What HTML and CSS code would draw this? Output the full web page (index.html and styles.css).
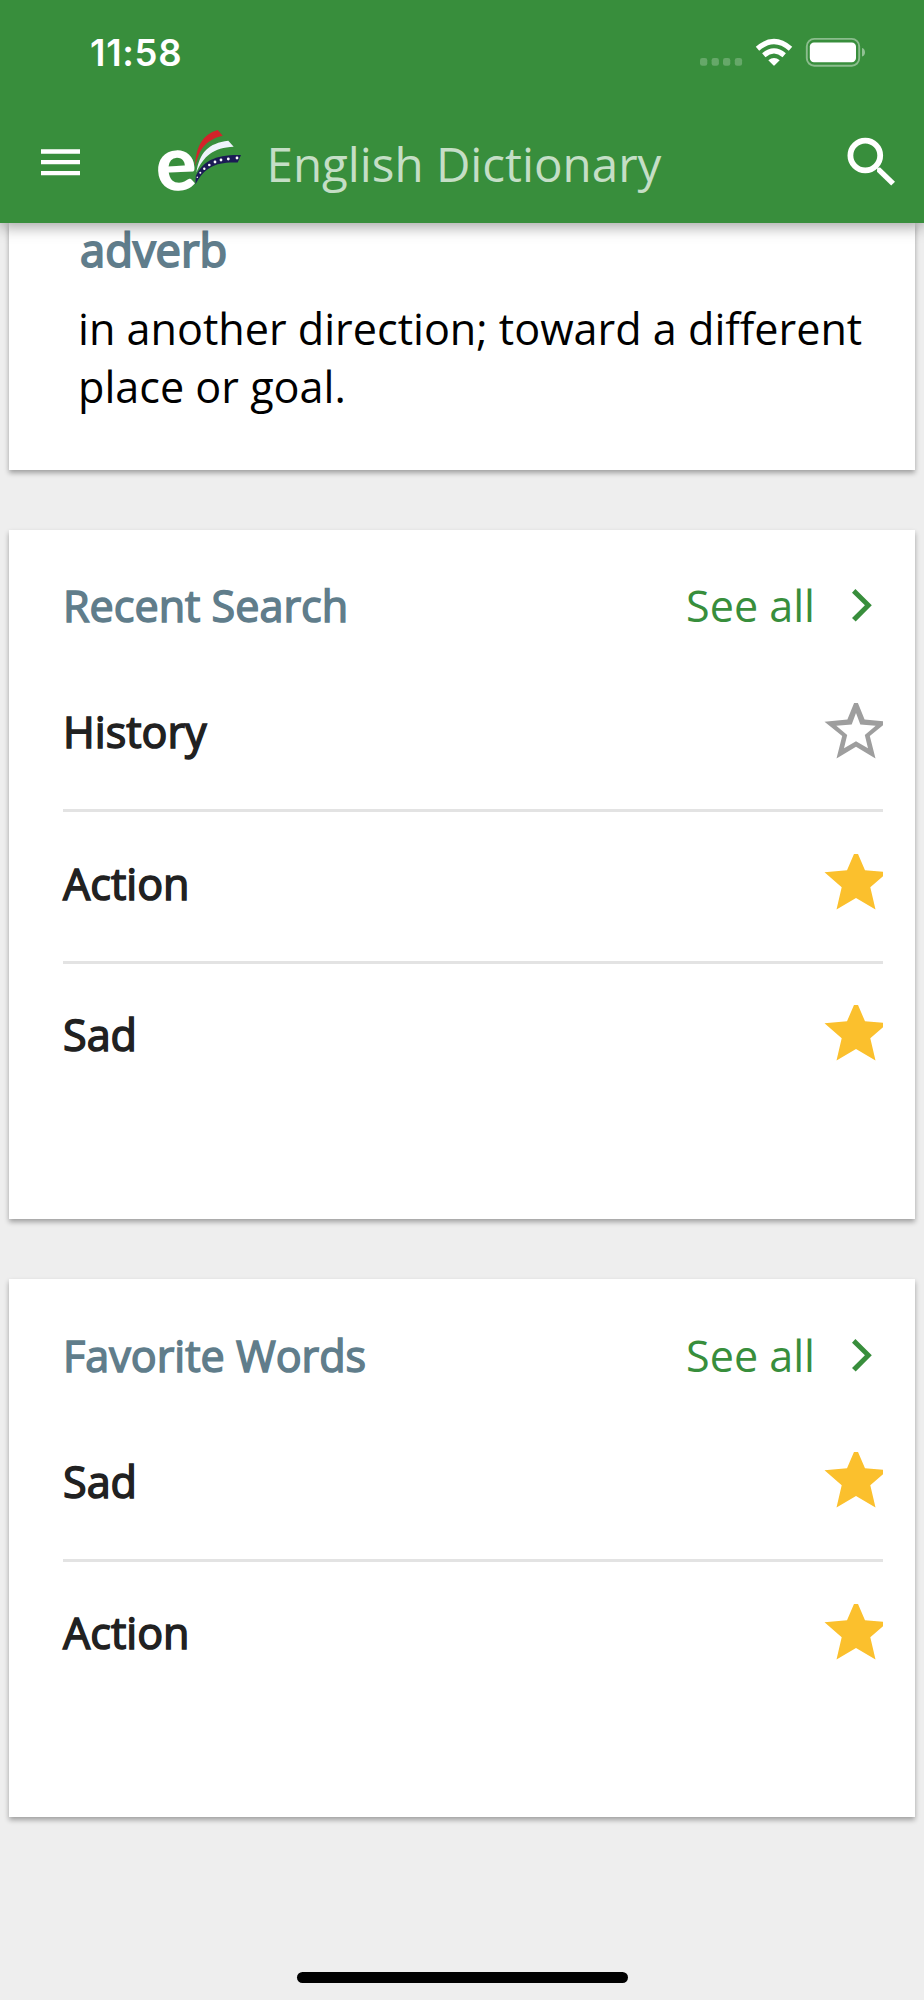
FILE: index.html
```html
<!DOCTYPE html>
<html lang="en">
<head>
<meta charset="utf-8">
<title>English Dictionary</title>
<link rel="stylesheet" href="styles.css">
</head>
<body>
<svg width="0" height="0" class="defs">
  <defs>
    <symbol id="star" viewBox="0 0 59 56">
      <path d="M32-4.7 41 16.3 63.5 18.2 46.3 33.3 51.5 55.5 32 44 12.5 55.5 17.7 33.3.5 18.2 23 16.3Z"/>
    </symbol>
    <symbol id="star-outline" viewBox="0 0 59 56">
      <path fill-rule="evenodd" d="M32-4.7 40.6 16.5 63.5 18.7 45.8 33 51.5 55.5 32 43.700 12.500 55.500 18.200 33 .5 18.700 23.400 16.500ZM32 10 27.700 21.400 12.300 22.700 23.200 32 20 45.300 32 38.300 44 45.300 40.800 32 51.700 22.700 36.300 21.400Z"/>
    </symbol>
    <symbol id="chevron" viewBox="0 0 20 33">
      <path d="M3.400 0 19.800 16.200 3.700 32.600 0 29 12.900 16.200 0 3.700Z"/>
    </symbol>
  </defs>
</svg>
<header class="app-header">
  <div class="status-bar">
    <span class="time">11:58</span>
    <svg class="status-icons" width="168" height="32" viewBox="699 36 168 32">
      <g fill="#fff" fill-opacity=".23">
        <rect x="700" y="58" width="7.3" height="7.8" rx="2.3"/>
        <rect x="711.6" y="58" width="7.3" height="7.8" rx="2.3"/>
        <rect x="723" y="58" width="7.3" height="7.8" rx="2.3"/>
        <rect x="734.8" y="58" width="7.3" height="7.8" rx="2.3"/>
      </g>
      <g fill="none" stroke="#fff" stroke-width="5.2">
        <path d="M757.5 48.7Q774 34.2 790.5 48.7"/>
        <path d="M763.8 55.2Q774 46.6 784.2 55.2"/>
      </g>
      <path d="M768.3 60.2Q774 55.6 779.7 60.2L774.7 65.3Q774 66 773.3 65.3Z" fill="#fff"/>
      <rect x="806.8" y="38.9" width="52.4" height="26.8" rx="7.5" fill="none" stroke="#fff" stroke-opacity=".42" stroke-width="1.9"/>
      <rect x="809.8" y="42.4" width="46.2" height="19.8" rx="4.2" fill="#fff"/>
      <path d="M862 48c4 1 4 7.600 0 8.600z" fill="#fff" fill-opacity=".45"/>
    </svg>
  </div>
  <div class="toolbar">
    <svg class="menu-icon" width="39" height="27" viewBox="0 0 39 27"><path d="M0 2.500H39M0 13.200H39M0 24.100H39" stroke="#fff" stroke-width="4.300"/></svg>
    <svg class="logo" width="86" height="66" viewBox="157 129 86 66">
      <text class="logo-letter" x="156" y="190.300" transform="rotate(-3 176 171)">e</text>
      <path fill="#d2232a" d="M195.400 166C195.500 148 202 134.500 217.700 130L222.700 135.700C207.500 139.500 199.500 147 195.400 166Z"/>
      <path fill="#eef3fb" d="M196.400 172.500C199.500 152.500 208.500 143 228.300 140.700L233.700 146.700C213.500 147.500 203.500 156 196.400 172.500Z"/>
      <path fill="#1b1a55" d="M195.400 184.500 195.800 176C203 161 215 154.500 241 155L237.700 162.500C216 161.500 204.500 167 195.400 184.500Z"/>
      <g fill="#fff"><circle cx="237" cy="158" r="1.400"/><circle cx="228.300" cy="159" r="1.400"/><circle cx="221" cy="160" r="1.400"/><circle cx="215" cy="162" r="1.400"/><circle cx="209.300" cy="165" r="1.300"/><circle cx="204.300" cy="168.700" r="1.200"/><circle cx="200.300" cy="172.700" r="1"/><circle cx="197.300" cy="177.300" r=".8"/></g>
    </svg>
    <h1 class="title">English Dictionary</h1>
    <svg class="search-icon" width="50" height="50" viewBox="846 136.500 50 50">
      <circle cx="865.300" cy="155" r="14.900" fill="none" stroke="#fff" stroke-width="5.800"/>
      <path d="M877.200 167.200 880.200 166.900 895 181.200 891.200 185 877 171.200Z" fill="#fff"/>
    </svg>
  </div>
</header>
<main class="content">
  <section class="card definition">
    <h2 class="part">adverb</h2>
    <p class="meaning">in another direction; toward a different place or goal.</p>
  </section>
  <section class="card recent">
    <div class="card-head"><h2 class="heading">Recent Search</h2><a class="see-all">See all</a><svg class="chevron"><use href="#chevron"/></svg></div>
    <ul class="words">
      <li class="word"><span>History</span><svg class="star empty"><use href="#star-outline"/></svg></li>
      <li class="word"><span>Action</span><svg class="star"><use href="#star"/></svg></li>
      <li class="word"><span>Sad</span><svg class="star"><use href="#star"/></svg></li>
    </ul>
  </section>
  <section class="card favorites">
    <div class="card-head"><h2 class="heading">Favorite Words</h2><a class="see-all">See all</a><svg class="chevron"><use href="#chevron"/></svg></div>
    <ul class="words">
      <li class="word"><span>Sad</span><svg class="star"><use href="#star"/></svg></li>
      <li class="word"><span>Action</span><svg class="star"><use href="#star"/></svg></li>
    </ul>
  </section>
</main>
<footer class="home-area"><div class="home-bar"></div></footer>
</body>
</html>
```
FILE: styles.css
```css
* { box-sizing: border-box; margin: 0; padding: 0; }
body {
  width: 924px;
  height: 2000px;
  display: flex;
  flex-direction: column;
  overflow: hidden;
  background: #eee;
  font-family: "Open Sans", "Noto Sans", sans-serif;
}
.defs { position: absolute; }
svg { display: block; flex: none; }
.app-header {
  position: relative;
  z-index: 1;
  flex: none;
  height: 222.6px;
  background: #388e3c;
  box-shadow: 0 4px 14px rgba(0, 0, 0, .36);
}
.status-bar {
  display: flex;
  align-items: center;
  justify-content: space-between;
  height: 104px;
  padding: 0 57px 0 90px;
}
.time {
  font: 600 36.500px/44px Inter, sans-serif;
  color: #fff;
  letter-spacing: .7px;
  padding-top: 2px;
}
.toolbar {
  display: flex;
  align-items: center;
  height: 116px;
  padding: 0 28px 0 41px;
}
.menu-icon { margin-right: 77px; }
.logo { overflow: visible; }
.logo-letter { font: 900 76px/1 Lato, sans-serif; fill: #fff; }
.title {
  flex: 1;
  padding: 3px 0 0 23.500px;
  font-size: 47.500px;
  line-height: 64px;
  font-weight: 400;
  color: #c5dec6;
  white-space: nowrap;
}
.content {
  display: flex;
  flex-direction: column;
  gap: 60px;
  padding: 0 9px;
}
.card {
  background: #fff;
  box-shadow: 0 3px 5px rgba(0, 0, 0, .33);
}
.definition { height: 247px; padding-left: 69px; }
.part {
  padding: 1px 0 0 2px;
  font-size: 45.300px;
  line-height: 52.600px;
  font-weight: 400;
  color: #607d8b;
  -webkit-text-stroke: 1.900px #607d8b;
}
.meaning {
  padding-top: 23.400px;
  font-size: 43.150px;
  line-height: 58.400px;
  color: #000;
}
.recent { height: 689.500px; padding: 0 32px 0 54px; }
.favorites { height: 538px; padding: 0 32px 0 54px; }
.card-head {
  display: flex;
  align-items: center;
  height: 130px;
  padding: 22px 11px 0 0;
}
.heading {
  flex: 1;
  padding-top: 1.500px;
  font-size: 43.100px;
  line-height: 60px;
  font-weight: 400;
  color: #607d8b;
  -webkit-text-stroke: 1.500px #607d8b;
}
.see-all { padding-top: 1px; font-size: 43.100px; line-height: 60px; color: #388e3c; }
.chevron { width: 20px; height: 33px; margin-left: 37px; fill: #388e3c; }
.words { padding-top: 1.500px; list-style: none; }
.word {
  display: flex;
  align-items: center;
  justify-content: space-between;
  height: 151.300px;
  padding-bottom: 9px;
  border-bottom: 3px solid #e3e3e3;
  font-size: 43.100px;
  line-height: 60px;
  color: #212121;
  -webkit-text-stroke: 1.500px #212121;
}
.word span { padding-top: 3px; }
.word:last-child { border-bottom-color: transparent; }
.star { width: 59px; height: 56px; fill: #fbc02d; -webkit-text-stroke: 0; }
.star.empty { fill: #9e9e9e; }
.home-area {
  flex: 1;
  display: flex;
  align-items: flex-end;
  padding: 0 0 17px 297px;
}
.home-bar { width: 330.500px; height: 11.500px; border-radius: 6px; background: #000; }
```
